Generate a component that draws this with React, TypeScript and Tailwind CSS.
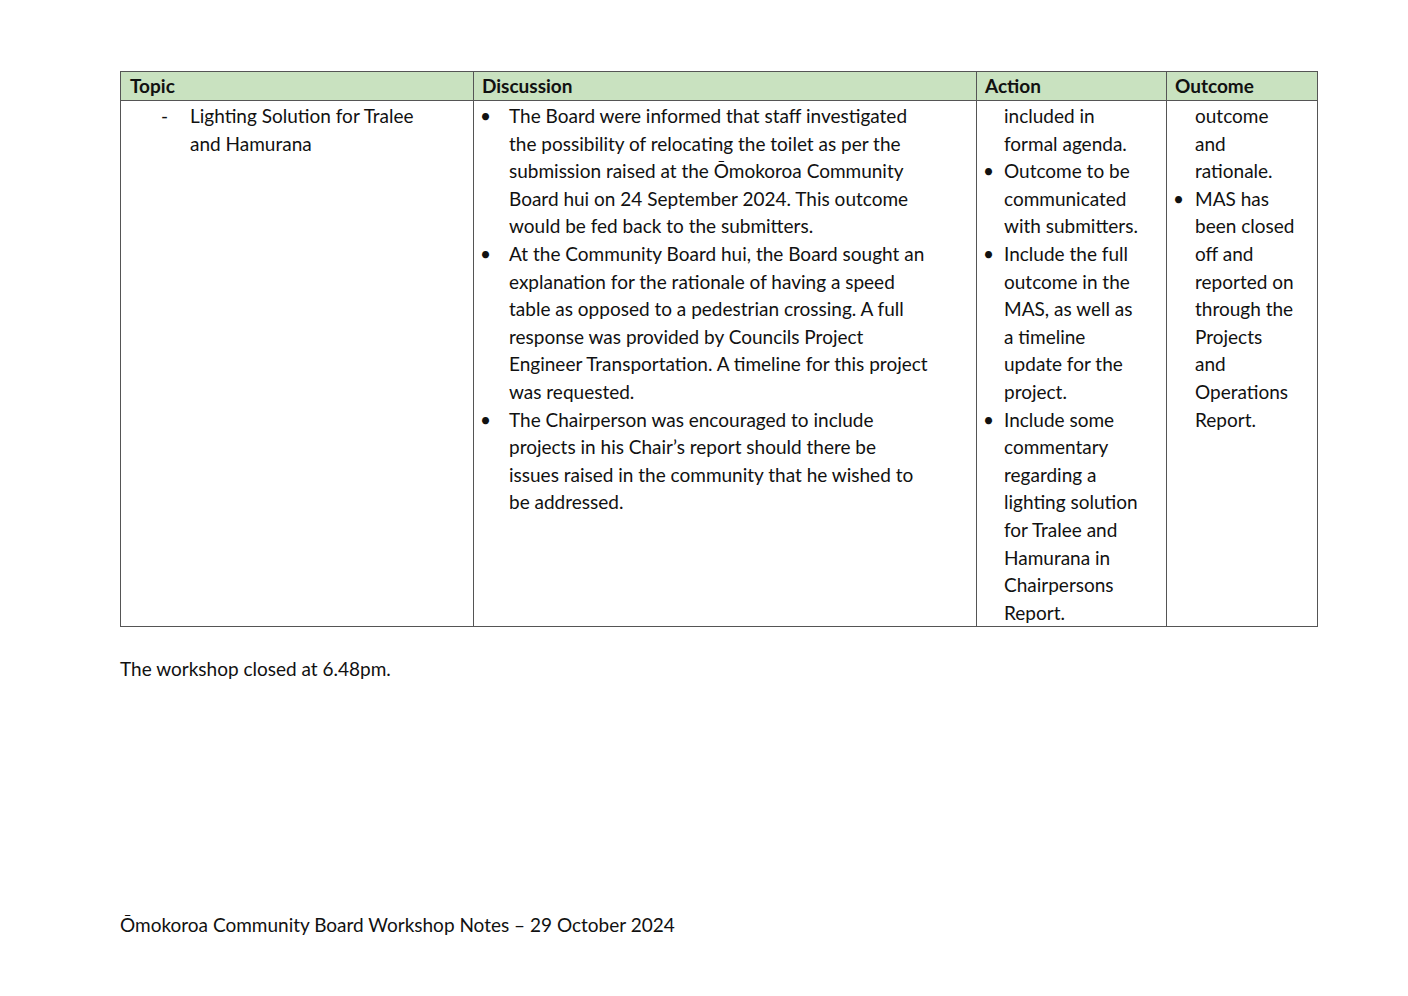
const L = (lines: string[]) => lines.map((l, i) => <div key={i} className="whitespace-nowrap">{l}</div>);

function Bullet({ lines, dot, gap }: { lines: string[]; dot: string; gap: string }) {
  return (
    <div className="relative">
      <span className={`absolute ${dot} top-0`}>•</span>
      <div className={gap}>{L(lines)}</div>
    </div>
  );
}

export default function App() {
  return (
    <div className="w-[1408px] h-[996px] bg-white text-[#111] text-[19px] leading-[27.6px]" style={{ fontFamily: "Lato, 'Open Sans', sans-serif" }}>
      <div className="pt-[71px] pl-[120px]">
        <table className="border-collapse" style={{ width: 1198 }}>
          <thead>
            <tr className="bg-[#c9e2c0] h-[29px] font-bold text-left">
              <th className="border border-[#555] w-[353px] pl-[9px] font-bold">Topic</th>
              <th className="border border-[#555] w-[503px] pl-[8px] font-bold">Discussion</th>
              <th className="border border-[#555] w-[190px] pl-[8px] font-bold">Action</th>
              <th className="border border-[#555] pl-[8px] font-bold">Outcome</th>
            </tr>
          </thead>
          <tbody>
            <tr className="align-top h-[525px]">
              <td className="border border-[#555] pt-[1px]">
                <div className="relative pl-[69px]">
                  <span className="absolute left-[40px]">-</span>
                  {L(["Lighting Solution for Tralee", "and Hamurana"])}
                </div>
              </td>
              <td className="border border-[#555] pt-[1px]">
                <Bullet dot="left-[6px]" gap="pl-[35px]" lines={["The Board were informed that staff investigated", "the possibility of relocating the toilet as per the", "submission raised at the Ōmokoroa Community", "Board hui on 24 September 2024. This outcome", "would be fed back to the submitters."]} />
                <Bullet dot="left-[6px]" gap="pl-[35px]" lines={["At the Community Board hui, the Board sought an", "explanation for the rationale of having a speed", "table as opposed to a pedestrian crossing.  A full", "response was provided by Councils Project", "Engineer Transportation. A timeline for this project", "was requested."]} />
                <Bullet dot="left-[6px]" gap="pl-[35px]" lines={["The Chairperson was encouraged to include", "projects in his Chair’s report should there be", "issues raised in the community that he wished to", "be addressed."]} />
              </td>
              <td className="border border-[#555] pt-[1px]">
                <div className="pl-[27px]">{L(["included in", "formal agenda."])}</div>
                <Bullet dot="left-[6px]" gap="pl-[27px]" lines={["Outcome to be", "communicated", "with submitters."]} />
                <Bullet dot="left-[6px]" gap="pl-[27px]" lines={["Include the full", "outcome in the", "MAS, as well as", "a timeline", "update for the", "project."]} />
                <Bullet dot="left-[6px]" gap="pl-[27px]" lines={["Include some", "commentary", "regarding a", "lighting solution", "for Tralee and", "Hamurana in", "Chairpersons", "Report."]} />
              </td>
              <td className="border border-[#555] pt-[1px]">
                <div className="pl-[28px]">{L(["outcome", "and", "rationale."])}</div>
                <Bullet dot="left-[6px]" gap="pl-[28px]" lines={["MAS has", "been closed", "off and", "reported on", "through the", "Projects", "and", "Operations", "Report."]} />
              </td>
            </tr>
          </tbody>
        </table>
        <p className="mt-[28px]">The workshop closed at 6.48pm.</p>
        <p className="mt-[228px]">Ōmokoroa Community Board Workshop Notes – 29 October 2024</p>
      </div>
    </div>
  );
}
